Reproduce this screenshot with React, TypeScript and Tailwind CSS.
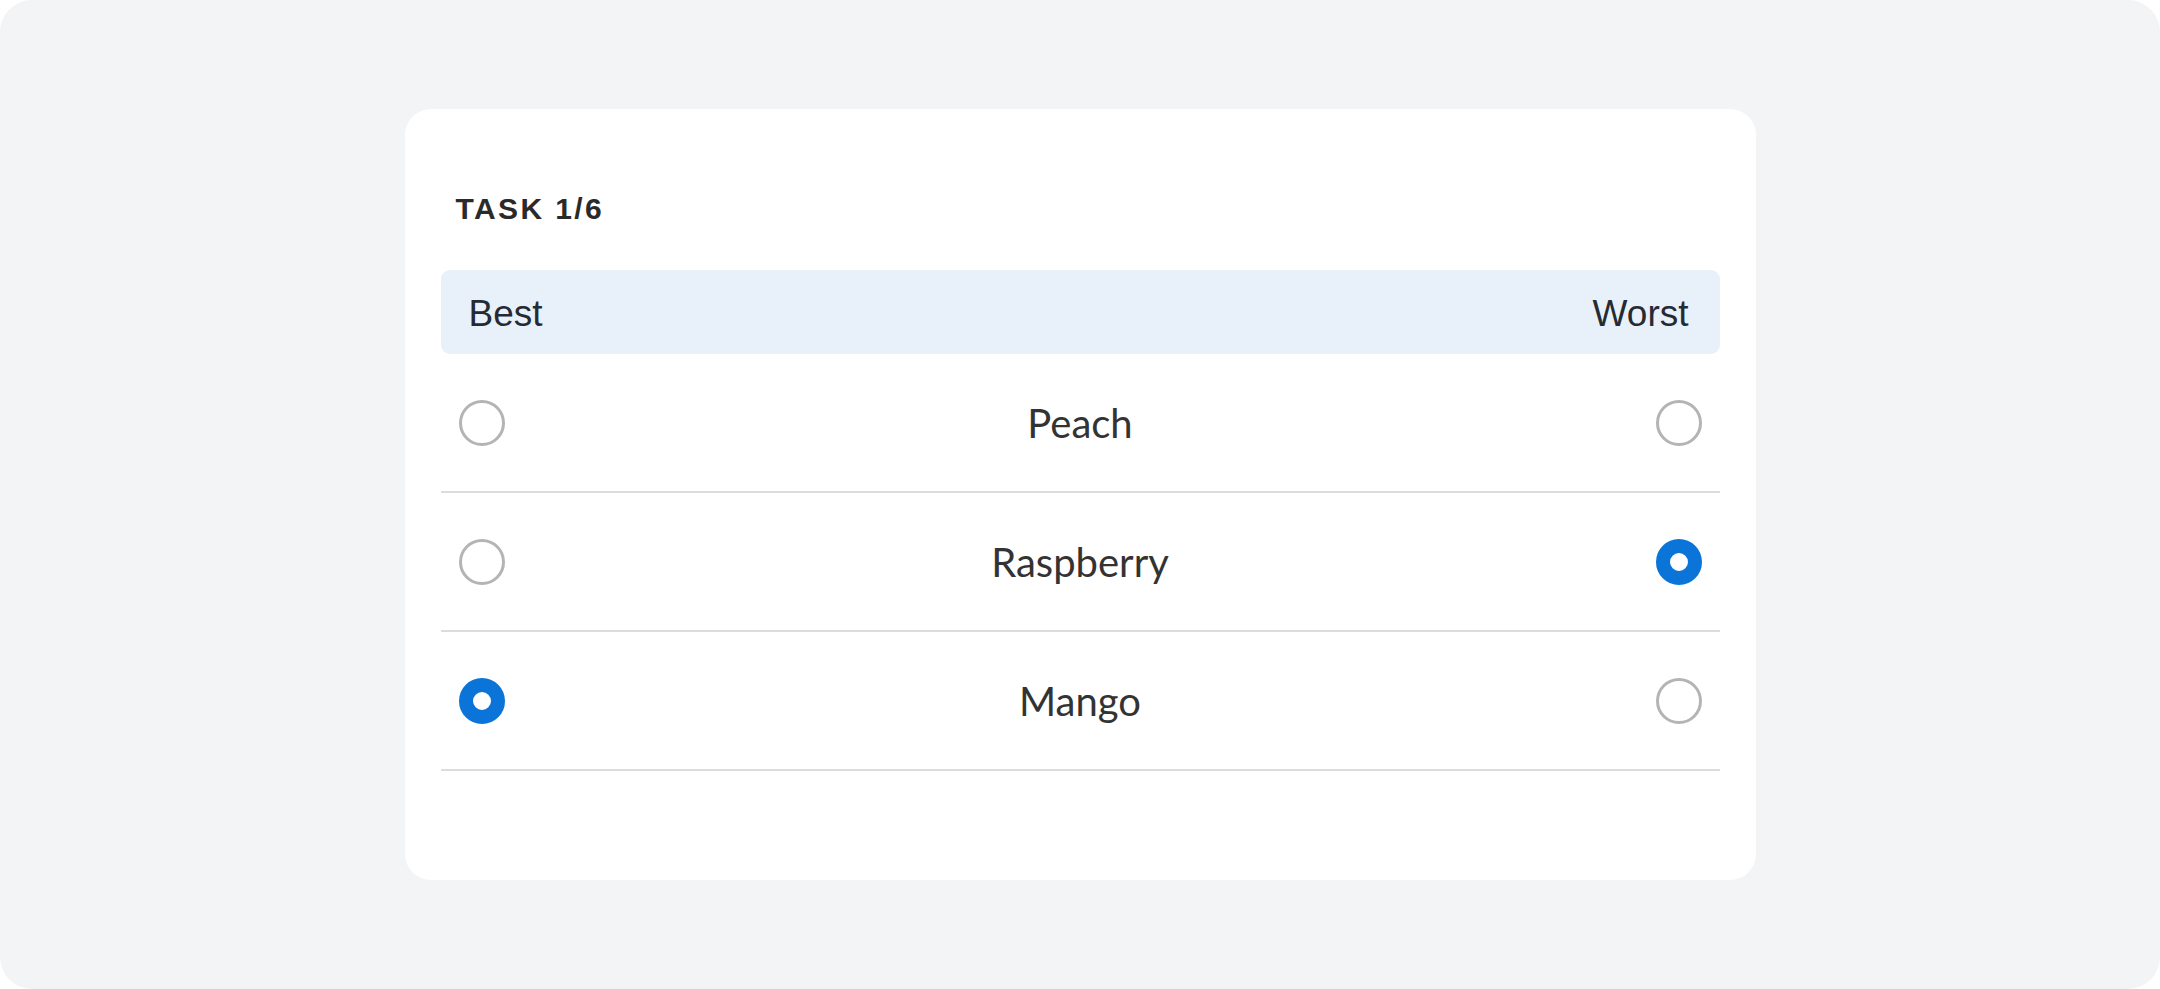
import { useState } from "react";

const items = ["Peach", "Raspberry", "Mango"];

function Radio({ checked, onClick }: { checked: boolean; onClick: () => void }) {
  return (
    <button
      onClick={onClick}
      className={`w-[46px] h-[46px] rounded-full shrink-0 ${
        checked
          ? "border-[14px] border-[#0b74d9] bg-white"
          : "border-[3px] border-[#b4b4b4] bg-white"
      }`}
    />
  );
}

export default function App() {
  // best / worst picks, by index
  const [best, setBest] = useState(2);
  const [worst, setWorst] = useState(1);

  return (
    <div className="bg-white min-h-screen">
      <div className="h-[989px] w-full rounded-[32px] bg-[#f3f4f6] flex items-center justify-center">
        <div className="w-[1351px] rounded-[26px] bg-white pt-[82px] pb-[109px] px-[36px]">
          <div
            className="pl-[15px] text-[30px] font-semibold tracking-[2.4px] text-[#2a2a2a] h-[35px] leading-[35px]"
            style={{ fontFamily: '"Liberation Sans", Arial, sans-serif' }}
          >
            TASK 1/6
          </div>

          <div
            className="mt-[44px] h-[84px] rounded-[9px] bg-[#e8f1fa] flex items-center justify-between pl-[28px] pr-[31px] pt-[4px] text-[37px] text-[#262b33]"
            style={{ fontFamily: '"Liberation Sans", Arial, sans-serif' }}
          >
            <span>Best</span>
            <span>Worst</span>
          </div>

          {items.map((item, i) => (
            <div
              key={item}
              className="h-[139px] border-b-2 border-[#dcdcdc] flex items-center px-[18px]"
            >
              <Radio checked={best === i} onClick={() => setBest(i)} />
              <div
                className="flex-1 text-center text-[40px] text-[#333333]"
                style={{ fontFamily: "Lato, sans-serif" }}
              >
                {item}
              </div>
              <Radio checked={worst === i} onClick={() => setWorst(i)} />
            </div>
          ))}
        </div>
      </div>
    </div>
  );
}
